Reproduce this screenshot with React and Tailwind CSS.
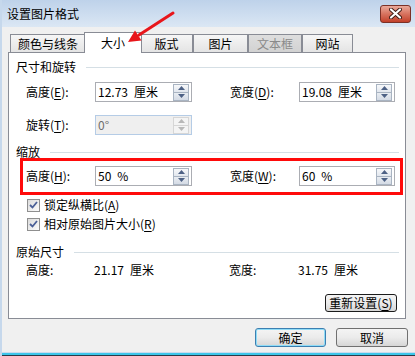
import React from "react";

function Spin({ disabled }) {
  const fill = disabled ? "#b8b8b8" : "#4d6185";
  return (
    <div
      className={
        "mr-[2px] flex h-[17px] w-[16px] flex-col border " +
        (disabled ? "border-[#d6d6d6] bg-[#f4f4f4]" : "border-[#a9b4c2]")
      }
    >
      <div
        className={
          "flex flex-1 items-center justify-center " +
          (disabled ? "" : "bg-gradient-to-b from-[#f7f8fa] to-[#e2e7ee]")
        }
      >
        <svg width="7" height="4" viewBox="0 0 7 4">
          <polygon points="3.5,0 7,4 0,4" fill={fill} />
        </svg>
      </div>
      <div
        className={
          "flex flex-1 items-center justify-center border-t " +
          (disabled
            ? "border-[#d6d6d6]"
            : "border-[#a9b4c2] bg-gradient-to-b from-[#e9edf2] to-[#d4dbe5]")
        }
      >
        <svg width="7" height="4" viewBox="0 0 7 4">
          <polygon points="0,0 7,0 3.5,4" fill={fill} />
        </svg>
      </div>
    </div>
  );
}

function Field({ value, width, disabled }) {
  return (
    <div
      className={
        "flex h-[20px] items-center border " +
        width +
        (disabled
          ? " border-[#b5cce6] bg-[#efefef] text-[#6d6d6d]"
          : " border-[#abadb3] bg-white text-black")
      }
    >
      <div className="flex-1 whitespace-pre pl-[2px]">{value}</div>
      <Spin disabled={disabled} />
    </div>
  );
}

function Mn({ children }) {
  return <span className="underline underline-offset-2">{children}</span>;
}

function Header({ children }) {
  return (
    <div className="flex h-[14px] items-center pl-[7px] pr-[6px]">
      <span>{children}</span>
      <div className="ml-[10px] h-px flex-1 bg-[#d5dfe5]" />
    </div>
  );
}

function Check({ children, className }) {
  return (
    <div className={"flex items-center pl-[18px] " + className}>
      <div className="flex h-[13px] w-[13px] items-center justify-center border border-[#8f8f8f] bg-gradient-to-br from-[#dcdcdc] to-[#fbfbfb]">
        <svg width="9" height="8" viewBox="0 0 9 8">
          <path d="M1 4 L3.5 6.5 L8 1" stroke="#4a5f97" strokeWidth="1.8" fill="none" />
        </svg>
      </div>
      <span className="ml-[4px]">{children}</span>
    </div>
  );
}

function Tab({ children, w, active, disabled }) {
  if (active) {
    return (
      <div
        className={
          "relative z-10 -mx-[2px] mb-[-1px] flex h-[21px] items-center justify-center border border-b-0 border-[#898c95] bg-white " +
          w
        }
      >
        {children}
      </div>
    );
  }
  return (
    <div
      className={
        "flex h-[18px] items-center justify-center border border-b-0 border-[#898c95] " +
        w +
        (disabled
          ? " bg-gradient-to-b from-[#dedede] to-[#d2d2d2] text-[#8a8a8a]"
          : " bg-gradient-to-b from-[#f6f6f6] to-[#e4e4e4]")
      }
    >
      {children}
    </div>
  );
}

function Btn({ children, className }) {
  return (
    <div
      className={
        "flex items-center justify-center rounded-[3px] border bg-gradient-to-b from-[#f4f4f4] via-[#ebebeb] to-[#d6d6d6] " +
        className
      }
    >
      {children}
    </div>
  );
}

export default function App() {
  return (
    <div className="relative flex h-[356px] w-[415px] flex-col overflow-hidden border-l-2 border-[#c6d8ec] bg-[#f0f0f0] font-['Noto_Sans_CJK_SC','Noto_Sans',sans-serif] text-[12px] leading-[14px] text-black">
      {/* title bar */}
      <div className="flex h-[27px] items-center bg-gradient-to-b from-[#bed2ea] to-[#dbe7f4] pl-[5px] pr-[4px]">
        <span className="text-[12px]">设置图片格式</span>
        <div className="flex-1" />
        <div className="flex h-[18px] w-[31px] items-center justify-center rounded-[3px] border border-[#7b3127] bg-gradient-to-b from-[#e9a99a] via-[#d7725e] to-[#c2402a]">
          <svg width="13" height="11" viewBox="0 0 13 11">
            <path d="M2 1.5 L11 9.5 M11 1.5 L2 9.5" stroke="#3a1a14" strokeWidth="4" strokeLinecap="round" />
            <path d="M2 1.5 L11 9.5 M11 1.5 L2 9.5" stroke="#ffffff" strokeWidth="2.2" strokeLinecap="round" />
          </svg>
        </div>
      </div>

      {/* tabs */}
      <div className="mt-[5px] flex h-[20px] items-end pl-[8px]">
        <Tab w="w-[76px]">颜色与线条</Tab>
        <Tab w="w-[58px]" active>
          大小
        </Tab>
        <Tab w="w-[53px]">版式</Tab>
        <Tab w="w-[55px]">图片</Tab>
        <Tab w="w-[54px]" disabled>
          文本框
        </Tab>
        <Tab w="w-[51px]">网站</Tab>
      </div>

      {/* panel */}
      <div className="ml-[6px] flex h-[267px] w-[398px] flex-col border border-[#898c95] bg-white">
        <div className="mt-[7px]">
          <Header>尺寸和旋转</Header>
        </div>
        <div className="mt-[8px] flex items-center pl-[17px]">
          <div className="w-[69px]">
            高度(<Mn>E</Mn>):
          </div>
          <Field value={"12.73\u2002厘米"} width="w-[97px]" />
          <div className="w-[38px]" />
          <div className="w-[69px]">
            宽度(<Mn>D</Mn>):
          </div>
          <Field value={"19.08\u2002厘米"} width="w-[96px]" />
        </div>
        <div className="mt-[13px] flex items-center pl-[17px]">
          <div className="w-[69px]">
            旋转(<Mn>T</Mn>):
          </div>
          <Field value="0°" width="w-[97px]" disabled />
        </div>

        <div className="mt-[10px]">
          <Header>缩放</Header>
        </div>
        <div className="mt-[7px] flex items-center pl-[17px]">
          <div className="w-[69px]">
            高度(<Mn>H</Mn>):
          </div>
          <Field value={"50\u2002%"} width="w-[97px]" />
          <div className="w-[38px]" />
          <div className="w-[69px]">
            宽度(<Mn>W</Mn>):
          </div>
          <Field value={"60\u2002%"} width="w-[96px]" />
        </div>
        <Check className="mt-[12px]">
          锁定纵横比(<Mn>A</Mn>)
        </Check>
        <Check className="mt-[5px]">
          相对原始图片大小(<Mn>R</Mn>)
        </Check>

        <div className="mt-[14px]">
          <Header>原始尺寸</Header>
        </div>
        <div className="mt-[4px] flex h-[14px] items-center pl-[17px]">
          <div className="w-[68px]">高度:</div>
          <div className="w-[135px] whitespace-pre">{"21.17\u2002厘米"}</div>
          <div className="w-[69px]">宽度:</div>
          <div className="whitespace-pre">{"31.75\u2002厘米"}</div>
        </div>
        <div className="mt-[17px] flex justify-end pr-[8px]">
          <Btn className="h-[18px] w-[72px] border-[#1c1c1c]">
            重新设置(<Mn>S</Mn>)
          </Btn>
        </div>
      </div>

      {/* dialog buttons */}
      <div className="mt-[9px] flex justify-end gap-[10px] pr-[7px]">
        <Btn className="h-[19px] w-[71px] border-[#3c7fb1] shadow-[inset_0_0_0_1px_#8fdcf7]">确定</Btn>
        <Btn className="h-[19px] w-[72px] border-[#707070]">取消</Btn>
      </div>

      <div className="flex-1" />
      <div className="h-px bg-[#c9dbee]" />
      <div className="h-[2px] bg-[#3cc6ea]" />
      <div className="h-px bg-[#2b3a48]" />

      {/* annotations */}
      <div className="pointer-events-none absolute left-[18px] top-[158px] z-20 h-[37px] w-[383px] border-[3px] border-[#ff0a0a]" />
      <svg
        className="pointer-events-none absolute left-0 top-0 z-20"
        width="415"
        height="60"
        viewBox="0 0 415 60"
      >
        <line x1="171" y1="13" x2="137" y2="35" stroke="#e8161b" strokeWidth="3" strokeLinecap="round" />
        <polygon points="126,42 139.5,40.5 133,30.5" fill="#e8161b" />
      </svg>
    </div>
  );
}
